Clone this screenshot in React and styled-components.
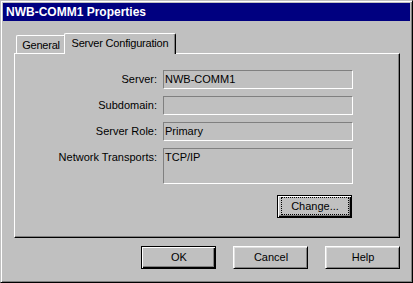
import React from "react";
import styled, { createGlobalStyle } from "styled-components";

const GlobalStyle = createGlobalStyle`
  html, body { margin: 0; padding: 0; background: #c0c0c0; }
  body {
    font-family: "Liberation Sans", Arial, sans-serif;
    font-size: 11px;
    color: #000;
  }
  * { box-sizing: border-box; }
`;

const Window = styled.div`
  width: 413px;
  height: 283px;
  background: #c0c0c0;
  border: 1px solid;
  border-color: #c0c0c0 #000 #000 #c0c0c0;
  box-shadow: inset 1px 1px #fff, inset -1px -1px #808080;
  padding: 2px;
  display: flex;
  flex-direction: column;
`;

const TitleBar = styled.div`
  height: 18px;
  background: #000080;
  color: #fff;
  font-weight: bold;
  font-size: 12px;
  display: flex;
  align-items: center;
  padding-left: 3px;
`;

const Body = styled.div`
  flex: 1;
  display: flex;
  flex-direction: column;
  padding: 12px 10px 0 11px;
`;

const TabRow = styled.div`
  height: 20px;
  display: flex;
  align-items: flex-end;
  padding-left: 2px;
  position: relative;
  z-index: 1;
`;

const Tab = styled.div`
  width: ${(p) => p.$width}px;
  height: ${(p) => (p.$active ? 21 : 18)}px;
  margin-left: ${(p) => (p.$active ? -2 : 0)}px;
  margin-bottom: ${(p) => (p.$active ? -1 : 0)}px;
  padding-bottom: ${(p) => (p.$active ? 2 : 0)}px;
  background: #c0c0c0;
  border-top: 1px solid #fff;
  border-left: 1px solid #fff;
  border-right: 1px solid #000;
  border-top-left-radius: 2px;
  border-top-right-radius: 2px;
  box-shadow: inset -1px 0 #808080;
  display: flex;
  align-items: center;
  justify-content: center;
  letter-spacing: -0.2px;
  position: relative;
  z-index: ${(p) => (p.$active ? 2 : 1)};
`;

const Panel = styled.div`
  height: 185px;
  border: 1px solid;
  border-color: #fff #000 #000 #fff;
  box-shadow: inset -1px -1px #808080;
  position: relative;
  z-index: 0;
  padding: 16px 0 0 0;
  display: flex;
  flex-direction: column;
`;

const Form = styled.div`
  display: grid;
  grid-template-columns: 142px 190px;
  column-gap: 6px;
  row-gap: 7px;
`;

const Label = styled.div`
  height: 19px;
  line-height: 19px;
  text-align: right;
  white-space: nowrap;
  align-self: start;
`;

const Field = styled.div`
  height: ${(p) => p.$height || 19}px;
  border: 1px solid;
  border-color: #808080 #fff #fff #808080;
  line-height: 17px;
  padding-left: 1px;
  white-space: nowrap;
`;

const ActionRow = styled.div`
  display: flex;
  justify-content: flex-end;
  margin-top: 11px;
  padding-right: 47px;
`;

const ButtonRow = styled.div`
  display: flex;
  justify-content: flex-end;
  gap: 17px;
  margin-top: 8px;
`;

const Button = styled.div`
  width: 75px;
  height: 23px;
  background: #c0c0c0;
  border: 1px solid;
  border-color: ${(p) => (p.$default ? "#000" : "#fff #000 #000 #fff")};
  box-shadow: ${(p) =>
    p.$default
      ? "inset 1px 1px #fff, inset -1px -1px #000, inset -2px -2px #808080"
      : "inset 1px 1px #dfdfdf, inset -1px -1px #808080"};
  padding: 1px 2px 2px 3px;
  display: flex;
`;

const ButtonText = styled.span`
  flex: 1;
  display: flex;
  align-items: center;
  justify-content: center;
  border: 1px dotted ${(p) => (p.$focused ? "#000" : "transparent")};
  padding-bottom: 1px;
`;

export default function App() {
  return (
    <>
      <GlobalStyle />
      <Window>
        <TitleBar>NWB-COMM1 Properties</TitleBar>
        <Body>
          <TabRow>
            <Tab $width={50}>General</Tab>
            <Tab $width={112} $active>
              Server Configuration
            </Tab>
          </TabRow>
          <Panel>
            <Form>
              <Label>Server:</Label>
              <Field>NWB-COMM1</Field>
              <Label>Subdomain:</Label>
              <Field />
              <Label>Server Role:</Label>
              <Field>Primary</Field>
              <Label>Network Transports:</Label>
              <Field $height={36}>TCP/IP</Field>
            </Form>
            <ActionRow>
              <Button $default>
                <ButtonText $focused>Change...</ButtonText>
              </Button>
            </ActionRow>
          </Panel>
          <ButtonRow>
            <Button $default>
              <ButtonText>OK</ButtonText>
            </Button>
            <Button>
              <ButtonText>Cancel</ButtonText>
            </Button>
            <Button>
              <ButtonText>Help</ButtonText>
            </Button>
          </ButtonRow>
        </Body>
      </Window>
    </>
  );
}
